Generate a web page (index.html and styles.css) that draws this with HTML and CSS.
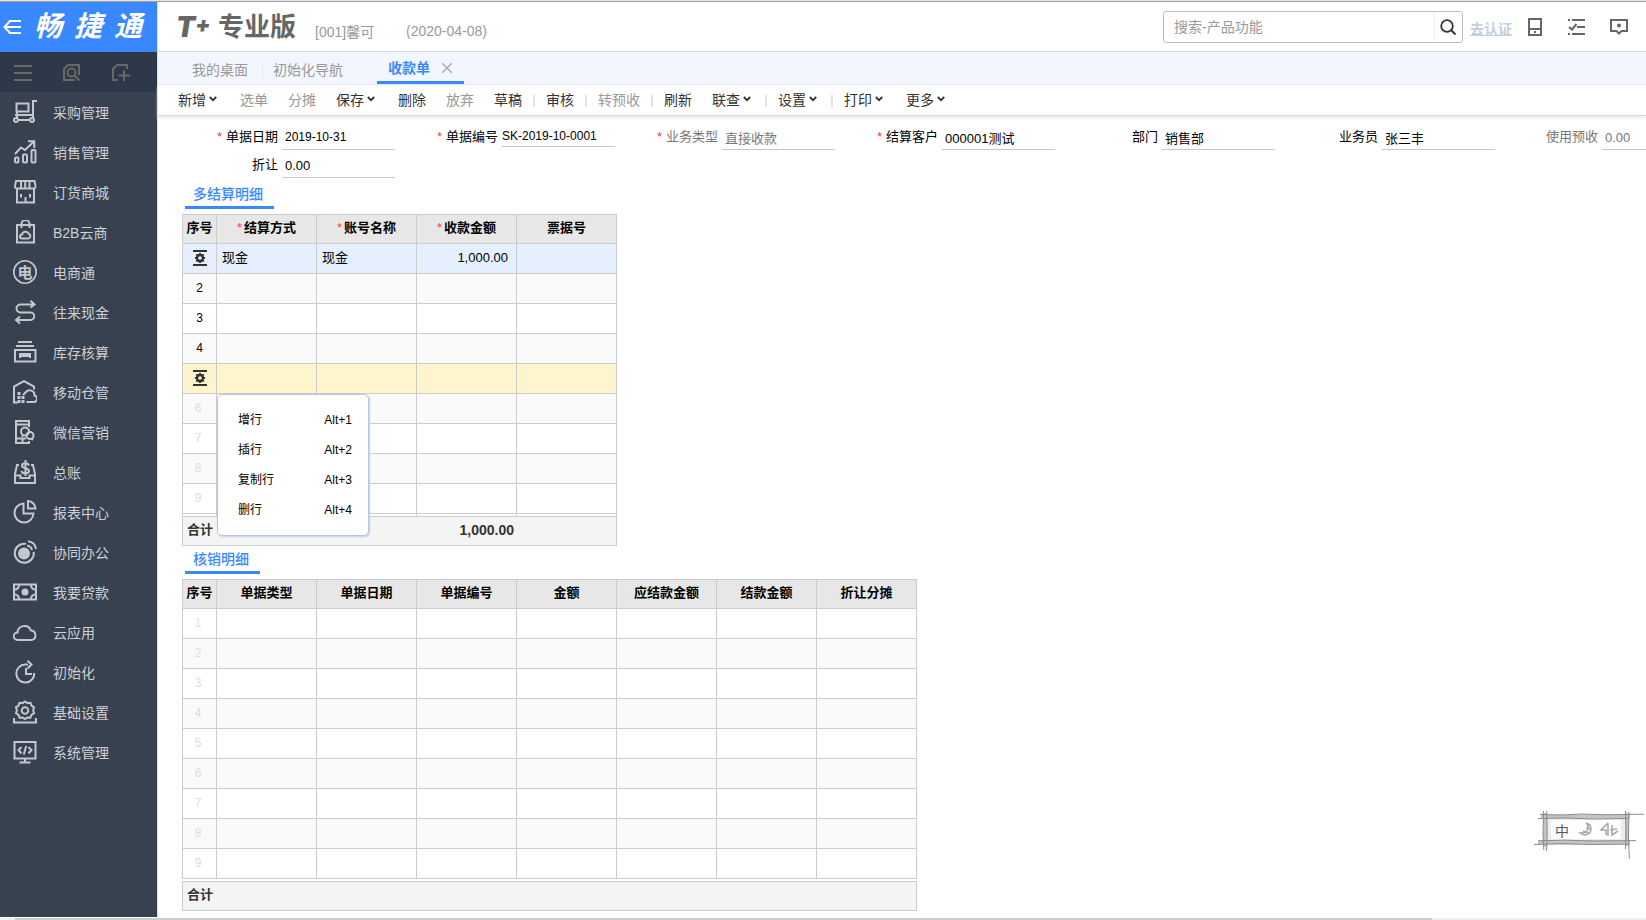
FILE: index.html
```html
<!DOCTYPE html>
<html lang="zh-CN">
<head>
<meta charset="utf-8">
<title>收款单</title>
<link rel="stylesheet" href="styles.css">
</head>
<body>
<svg class="defs" aria-hidden="true">
  <symbol id="row-gear" viewBox="0 0 14 16"><path d="M0 1h14M0 15h14" stroke="#333" stroke-width="2"/><circle cx="7" cy="8" r="3" fill="none" stroke="#333" stroke-width="2.400"/><path d="M7 3v2M7 11v2M2 8h2M10 8h2M3.400 4.400L5 6M9 10l1.600 1.600M3.400 11.600L5 10M9 6l1.600-1.600" stroke="#333" stroke-width="2"/></symbol>
  <symbol id="chev" viewBox="0 0 8 6"><path d="M.8 1L4 4.200 7.200 1" fill="none" stroke="#333" stroke-width="1.800"/></symbol>
</svg>
<div class="page">
  <div class="shell">
    <aside class="sidebar">
      <div class="brand">
        <button class="back" aria-label="收起"><svg width="19" height="18" viewBox="0 0 19 18"><path d="M7 3L1.500 9 7 15M1.500 9H18M6 3h12M6 15h12" fill="none" stroke="#fff" stroke-width="2"/></svg></button>
        <div class="brand-name"><span>畅</span><span>捷</span><span>通</span></div>
      </div>
      <div class="side-tools">
        <button aria-label="菜单"><svg width="18" height="18" viewBox="0 0 18 18"><path d="M0 2h18M0 9h18M0 16h18"/></svg></button>
        <button aria-label="查找"><svg width="18" height="18" viewBox="0 0 18 18"><path d="M12 16H1V5l4-4h11v10"/><circle cx="8.500" cy="8.500" r="4"/><path d="M11.500 11.500l5 5"/></svg></button>
        <button aria-label="新建"><svg width="18" height="18" viewBox="0 0 18 18"><path d="M6 16H1V5l4-4h10v4M12 6v11M6.500 11.500H18"/></svg></button>
      </div>
      <nav class="menu">
        <a href="#"><svg viewBox="0 0 24 24"><path d="M3.500 3.500h12v8h-12zM24 1h-4v17M4 12v6M2 15h18M5 20h12"/><circle cx="3" cy="20" r="2"/><circle cx="19" cy="20" r="2"/></svg>采购管理</a>
        <a href="#"><svg viewBox="0 0 24 24"><rect x="2" y="17.500" width="3.500" height="5" rx="1"/><rect x="10" y="14.500" width="4" height="8" rx="1"/><rect x="18.500" y="10" width="4" height="12.500" rx="1"/><path d="M2 14l6-6.500 4 2.500 9-8.500M15 1.300h6.300V8"/></svg>销售管理</a>
        <a href="#"><svg viewBox="0 0 24 24"><path d="M3 1h18.500l1 5a2 2 0 0 1-2 2.500h-17A2 2 0 0 1 2 6zM8 1v7M12.200 1v7M16.500 1v7M4 9v13.500h17V9M8 14v3.500M17 14v3.500M12.500 17v5"/></svg>订货商城</a>
        <a href="#"><svg viewBox="0 0 24 24"><path d="M4 5h17v17.500H4zM8.500 8V4a4 4 0 0 1 8 0v4M9 18.500a2 2 0 0 1 0-4 3.500 3.500 0 0 1 6.500-1 2.600 2.600 0 0 1 0 5z"/></svg>B2B云商</a>
        <a href="#"><svg viewBox="0 0 24 24"><circle cx="12" cy="12" r="11.200" stroke-width="1.600"/><text x="12" y="17.500" class="glyph">电</text></svg>电商通</a>
        <a href="#"><svg viewBox="0 0 24 24"><path d="M21 4.500H7.500a4 4 0 0 0 0 8h10a3.700 3.700 0 0 1 0 7.500H4M17.500.8l4 3.700-4 3M7 16.500L3 20l4 3.500"/></svg>往来现金</a>
        <a href="#"><svg viewBox="0 0 24 24"><path d="M5 2h14M3 6h18M2 10h20.500v11.500H2zM7 18v-4h10v4M7 16h10"/></svg>库存核算</a>
        <a href="#"><svg viewBox="0 0 24 24"><path d="M5 22.500H1V6.500L11 1l10 5.500v3M13.500 22h7a3.300 3.300 0 0 0 1-6.500 4.800 4.800 0 0 0-8.500-3.500l-3 3"/><path d="M4.500 13.500h3M4.500 17.500h7M4.500 21.500h8" stroke-dasharray="3 1" stroke-width="3"/></svg>移动仓管</a>
        <a href="#"><svg viewBox="0 0 24 24"><path d="M16 7V1H3v22h13v-2M3 4.500h13M3 18.500h10M9.500 18.500v4"/><circle cx="12" cy="11.500" r="4"/><circle cx="17" cy="15.500" r="3.500"/><path d="M10 15l-1 2M18 18.500l2 1.500"/></svg>微信营销</a>
        <a href="#"><svg viewBox="0 0 24 24"><path d="M6 5H4L2 14v9h20v-9L20 5h-2M2 15.500h5.500V18h9v-2.500H22M16 5.500c-1-3-7-3-7 .3 0 3 7 2 7 5.200 0 3.500-7 3-7.500-.2M12.500 0v16"/></svg>总账</a>
        <a href="#"><svg viewBox="0 0 24 24"><path d="M10.500 3.500a9.500 9.500 0 1 0 10 10h-10zM15 1v7.500h7.500A8 8 0 0 0 15 1z"/></svg>报表中心</a>
        <a href="#"><svg viewBox="0 0 24 24"><path d="M13 3.800a9.500 9.500 0 1 0 7.700 8"/><circle cx="11" cy="13.500" r="5" fill="#c3c8cf"/><path d="M14 5.500c3 .5 4.500 2 5 4.500M15 1.200c5 .6 7.500 3.500 8 7.800"/></svg>协同办公</a>
        <a href="#"><svg viewBox="0 0 24 24"><path d="M1 4.500h22v15H1zM2 9.500c2 0 4-2 4-4M22 9.500c-2 0-4-2-4-4M2 14.500c2 0 4 2 4 4M22 14.500c-2 0-4 2-4 4"/><circle cx="12" cy="12" r="2.500" fill="#c3c8cf"/></svg>我要贷款</a>
        <a href="#"><svg viewBox="0 0 24 24"><path d="M4.500 20a3.500 3.500 0 0 1 0-7.500A7 7 0 0 1 18 10.500 4.800 4.800 0 0 1 18.500 20z"/></svg>云应用</a>
        <a href="#"><svg viewBox="0 0 24 24"><path d="M15 4.500h-3a9 9 0 1 0 9.300 8.500M13 8v6h6M14.500.8l4 3.700-4 4"/></svg>初始化</a>
        <a href="#"><svg viewBox="0 0 24 24"><path d="M12 1.500l2.500 1.600 3-.3 1 2.900 2.500 1.600-.8 3 .8 3-2.600 1.600-1 2.800-3-.2-2.400 1.600-2.500-1.600-3 .2-1-2.800L3 13.300l.9-3-.9-3 2.500-1.600 1-2.900 3 .3zM1 18v4.500h22V18"/><circle cx="12" cy="10.500" r="3.300"/></svg>基础设置</a>
        <a href="#"><svg viewBox="0 0 24 24"><path d="M1.500 2h21v16.500h-21zM12 18.500V22M6.500 22.500h11M8.500 7L5.500 10l3 3.500M15.500 7l3 3-3 3.500M13.200 6l-2.400 8.500"/></svg>系统管理</a>
      </nav>
    </aside>
    <main class="main">
      <header class="header">
        <div class="product"><span class="tplus">T<sup>+</sup></span><span class="edition">专业版</span></div>
        <span class="account">[001]馨可</span>
        <span class="date">(2020-04-08)</span>
        <div class="header-right">
          <form class="search">
            <input type="text" aria-label="搜索" placeholder="搜索-产品功能">
            <button type="button" aria-label="搜索"><svg width="17" height="17" viewBox="0 0 17 17"><circle cx="7" cy="7" r="5.800" fill="none" stroke="#333" stroke-width="1.800"/><path d="M11.500 11.500l4 4" stroke="#333" stroke-width="2"/></svg></button>
          </form>
          <a class="cert" href="#">去认证</a>
          <div class="icons">
            <button aria-label="终端"><svg width="14" height="18" viewBox="0 0 14 18"><path d="M1 1h12v16H1zM1 11h12"/><path d="M6 14h2"/></svg></button>
            <button aria-label="待办"><svg width="18" height="18" viewBox="0 0 18 18"><path d="M5 2h13M10 9h8M5 16h13M1 2h2M1 16h2M2 9l3 2.500L9.500 6"/></svg></button>
            <button aria-label="消息"><svg width="18" height="18" viewBox="0 0 18 18"><path d="M1 2h16v11h-5.500L9 15.500 6.500 13H1z"/><circle cx="9" cy="7.500" r="1"/></svg></button>
          </div>
        </div>
      </header>
      <nav class="tabs">
        <a class="tab" href="#">我的桌面</a>
        <a class="tab tab-second" href="#">初始化导航</a>
        <div class="tab tab-active"><a href="#">收款单</a><button aria-label="关闭"><svg width="10" height="10" viewBox="0 0 10 10"><path d="M0 0l10 10M10 0L0 10" stroke="#aaa" stroke-width="1.400"/></svg></button></div>
      </nav>
      <div class="toolbar">
        <button>新增<svg><use href="#chev"/></svg></button>
        <button disabled>选单</button>
        <button disabled>分摊</button>
        <button>保存<svg><use href="#chev"/></svg></button>
        <button>删除</button>
        <button disabled>放弃</button>
        <button>草稿</button>
        <i></i>
        <button>审核</button>
        <i></i>
        <button disabled>转预收</button>
        <i></i>
        <button>刷新</button>
        <button>联查<svg><use href="#chev"/></svg></button>
        <i></i>
        <button>设置<svg><use href="#chev"/></svg></button>
        <i></i>
        <button>打印<svg><use href="#chev"/></svg></button>
        <button>更多<svg><use href="#chev"/></svg></button>
      </div>
      <div class="form">
        <div class="field"><label for="f1"><b>*</b>单据日期</label><input class="small" id="f1" value="2019-10-31"></div>
        <div class="field"><label for="f2"><b>*</b>单据编号</label><input class="small short" id="f2" value="SK-2019-10-0001"></div>
        <div class="field muted"><label for="f3"><b>*</b>业务类型</label><input id="f3" value="直接收款" readonly></div>
        <div class="field"><label for="f4"><b>*</b>结算客户</label><input id="f4" value="000001测试"></div>
        <div class="field"><label for="f5">部门</label><input id="f5" value="销售部"></div>
        <div class="field"><label for="f6">业务员</label><input id="f6" value="张三丰"></div>
        <div class="field muted"><label for="f7">使用预收</label><input id="f7" value="0.00" readonly></div>
        <div class="field"><label for="f8">折让</label><input id="f8" value="0.00"></div>
      </div>
      <section class="block">
        <h2>多结算明细</h2>
        <table class="grid grid-five">
          <thead><tr><th class="no">序号</th><th><b>*</b>结算方式</th><th><b>*</b>账号名称</th><th><b>*</b>收款金额</th><th>票据号</th></tr></thead>
          <tbody>
            <tr class="current"><td class="no"><button aria-label="行操作"><svg width="14" height="16"><use href="#row-gear"/></svg></button></td><td>现金</td><td>现金</td><td class="num">1,000.00</td><td></td></tr>
            <tr><td class="no">2</td><td></td><td></td><td></td><td></td></tr>
            <tr><td class="no">3</td><td></td><td></td><td></td><td></td></tr>
            <tr><td class="no">4</td><td></td><td></td><td></td><td></td></tr>
            <tr class="hovered"><td class="no"><button aria-label="行操作"><svg width="14" height="16"><use href="#row-gear"/></svg></button></td>
              <td class="anchor">
                <div class="popup">
                  <button><span>增行</span><span>Alt+1</span></button>
                  <button><span>插行</span><span>Alt+2</span></button>
                  <button><span>复制行</span><span>Alt+3</span></button>
                  <button><span>删行</span><span>Alt+4</span></button>
                </div>
              </td><td></td><td></td><td></td></tr>
            <tr class="idle"><td class="no">6</td><td></td><td></td><td></td><td></td></tr>
            <tr class="idle"><td class="no">7</td><td></td><td></td><td></td><td></td></tr>
            <tr class="idle"><td class="no">8</td><td></td><td></td><td></td><td></td></tr>
            <tr class="idle"><td class="no">9</td><td></td><td></td><td></td><td></td></tr>
          </tbody>
          <tfoot>
            <tr class="gap"><td></td><td></td><td></td><td></td><td></td></tr>
            <tr class="total"><td colspan="3">合计</td><td class="num">1,000.00</td><td></td></tr>
          </tfoot>
        </table>
      </section>
      <section class="block">
        <h2>核销明细</h2>
        <table class="grid grid-eight">
          <thead><tr><th class="no">序号</th><th>单据类型</th><th>单据日期</th><th>单据编号</th><th>金额</th><th>应结款金额</th><th>结款金额</th><th>折让分摊</th></tr></thead>
          <tbody>
            <tr class="idle"><td class="no">1</td><td></td><td></td><td></td><td></td><td></td><td></td><td></td></tr>
            <tr class="idle"><td class="no">2</td><td></td><td></td><td></td><td></td><td></td><td></td><td></td></tr>
            <tr class="idle"><td class="no">3</td><td></td><td></td><td></td><td></td><td></td><td></td><td></td></tr>
            <tr class="idle"><td class="no">4</td><td></td><td></td><td></td><td></td><td></td><td></td><td></td></tr>
            <tr class="idle"><td class="no">5</td><td></td><td></td><td></td><td></td><td></td><td></td><td></td></tr>
            <tr class="idle"><td class="no">6</td><td></td><td></td><td></td><td></td><td></td><td></td><td></td></tr>
            <tr class="idle"><td class="no">7</td><td></td><td></td><td></td><td></td><td></td><td></td><td></td></tr>
            <tr class="idle"><td class="no">8</td><td></td><td></td><td></td><td></td><td></td><td></td><td></td></tr>
            <tr class="idle"><td class="no">9</td><td></td><td></td><td></td><td></td><td></td><td></td><td></td></tr>
          </tbody>
          <tfoot>
            <tr class="gap open"><td colspan="8"></td></tr>
            <tr class="total"><td colspan="8">合计</td></tr>
          </tfoot>
        </table>
      </section>
    </main>
  </div>
  <div class="scrollbar"><div class="thumb"></div></div>
</div>
<div class="ime">
  <svg width="114" height="50" viewBox="0 0 114 50">
    <rect x="13" y="6" width="82" height="27" fill="#ececec"/>
    <rect x="19" y="10" width="70" height="19" rx="3" fill="#fff"/>
    <g fill="none" stroke="#c4c4c4" stroke-width="4"><path d="M9 6.500h89M6 32.500h92M13 3v34M95 3v33"/></g>
    <g fill="none" stroke="#8c8c8c" stroke-width="1"><path d="M8 4.500l22 .5 20-1 24 .8 38-.6M6 8.500l28-.5 26 1 36-.5M6 30.800l26-.6 30 .8 42-.4M2 34.500l28-.8 30 .9 36-.5M11.500 1l-.5 24 .8 15M14.700 1l.5 22-.6 18M93.500 1l.6 22-.6 16M97 2l-.5 23 .8 24"/></g>
    <text x="30" y="26" class="ime-text">中</text>
    <g fill="none" stroke="#aaa" stroke-width="1.600"><path d="M54 13c5 5 2 10-6 10 5 4 11 1 11-4 0-3-2-5-5-6zM51 21l5 2M54 18l4 1"/><path d="M76 13l-7 7h5v5M76 13v13M80 15v10l6-4M78 20l7-1"/></g>
  </svg>
</div>
</body>
</html>
```
FILE: styles.css
```css
* { box-sizing: border-box; }
body {
  margin: 0;
  background: #fff;
  color: #000;
  font-family: "Liberation Sans", "Noto Sans CJK SC", sans-serif;
  font-size: 13px;
  overflow-x: hidden;
}
button {
  margin: 0;
  padding: 0;
  border: 0;
  background: none;
  font: inherit;
  color: inherit;
}
a { color: inherit; text-decoration: none; }
svg { display: block; flex: none; }
.defs { position: absolute; width: 0; height: 0; }

.page {
  display: flex;
  flex-direction: column;
  min-height: 100vh;
  border-top: 1px solid #e4e4e4;
}
.shell {
  display: flex;
  flex: 1;
  border-top: 1px solid #a0a0a0;
  border-bottom: 1px solid #fff;
}

/* Sidebar */
.sidebar { flex: 0 0 157px; background: #37414f; }
.brand {
  display: flex;
  align-items: center;
  height: 50px;
  padding-left: 3px;
  background: #3a88ff;
  color: #fff;
}
.brand-name {
  display: flex;
  gap: 12px;
  margin-left: 12px;
  font-size: 28px;
  font-weight: 700;
  font-style: italic;
  line-height: 50px;
}
.side-tools {
  display: flex;
  align-items: center;
  gap: 31px;
  height: 40px;
  padding: 2px 0 0 14px;
  background: #2d3849;
}
.side-tools svg { fill: none; stroke: #686868; stroke-width: 2; }
.menu a {
  display: flex;
  align-items: center;
  gap: 16px;
  height: 40px;
  padding-left: 13px;
  font-size: 14px;
  color: #cdd1d7;
}
.menu svg {
  width: 24px;
  height: 24px;
  fill: none;
  stroke: #c3c8cf;
  stroke-width: 2;
}
.menu .glyph {
  fill: #c3c8cf;
  stroke: none;
  font-size: 15px;
  font-weight: 700;
  text-anchor: middle;
}

/* Header */
.main { flex: 1; min-width: 0; border-left: 1px solid #dcdfe4; }
.header {
  display: flex;
  align-items: center;
  height: 50px;
  padding-left: 18px;
  border-bottom: 1px solid #d9d9d9;
  color: #999;
  font-size: 14px;
}
.product { display: flex; align-items: center; color: #666; font-weight: 700; line-height: 50px; }
.tplus { width: 42px; font-family: Inter, sans-serif; font-size: 28px; font-weight: 900; font-style: italic; white-space: nowrap; }
.tplus sup { font-size: 22px; line-height: 0; vertical-align: 5px; }
.edition { font-size: 26px; }
.account { margin: 9px 0 0 19px; width: 91px; }
.date { margin-top: 9px; }
.header-right { display: flex; align-items: center; margin-left: auto; padding-right: 18px; }
.search {
  display: flex;
  width: 300px;
  height: 32px;
  border: 1px solid #bdbdbd;
  border-radius: 3px;
  margin-top: 1px;
}
.search input {
  flex: 1;
  min-width: 0;
  padding: 0 10px;
  border: 0;
  background: none;
  font: inherit;
  outline: 0;
}
.search input::placeholder { color: #999; opacity: 1; }
.search button { width: 28px; padding-left: 5px; border-left: 1px solid #f2f2f2; }
.cert {
  margin: 2px 16px 0 7px;
  color: #c3cfdd;
  font-weight: 700;
  text-decoration: underline;
}
.icons { display: flex; align-items: center; gap: 25px; padding-top: 1px; }
.icons svg { fill: none; stroke: #666; stroke-width: 2; }

/* Document tabs */
.tabs {
  display: flex;
  height: 33px;
  padding-left: 34px;
  border-bottom: 1px solid #e3e7f2;
  background: #f2f6ff;
  color: #999;
  font-size: 14px;
  line-height: 36px;
}
.tab { margin-right: 14px; }
.tab-second { width: 105px; margin-right: 0; padding-left: 10px; border-left: 1px solid #e3e7f0; border-image: linear-gradient(transparent 10px, #e3e7f0 10px, #e3e7f0 26px, transparent 26px) 1; }
.tab-second + .tab-active { margin-left: 10px; }
.tab-active {
  display: flex;
  align-items: center;
  gap: 12px;
  width: 87px;
  height: 32px;
  padding: 3px 0 0 11px;
  border-bottom: 3px solid #3a88ff;
  color: #3a88ff;
  font-weight: 700;
}

/* Toolbar */
.toolbar {
  display: flex;
  align-items: center;
  height: 31px;
  padding: 0 0 2px 20px;
  border-bottom: 1px solid #d6d6d6;
  box-shadow: 0 2px 3px #ebebeb;
  color: #333;
  font-size: 14px;
}
.toolbar button { display: flex; align-items: center; margin-right: 20px; white-space: nowrap; }
.toolbar button:disabled { color: #999; }
.toolbar svg { width: 8px; height: 6px; margin: 0 3px; }
.toolbar i { width: 2px; height: 12px; margin: 4px 11px 0 -9px; background: #e2e2e2; }

/* Form */
.form {
  display: grid;
  grid-template-columns: repeat(7, 220px);
  overflow: hidden;
  padding: 6px 0 0 17px;
}
.field { display: flex; gap: 4px; height: 28px; }
.field label { flex: 1; padding-top: 3px; line-height: 24px; text-align: right; }
.field b, .grid b { color: #ff3b4e; font-weight: 400; }
.field b { margin-right: 4px; }
.grid b { margin-right: 2px; }
.field input {
  width: 113px;
  height: 28px;
  padding: 3px 3px 0;
  border: 0;
  border-bottom: 1px solid #c9c9c9;
  background: none;
  color: inherit;
  font: inherit;
  outline: 0;
}
.field .small { font-size: 12px; }
.field .short { height: 25px; padding-left: 0; }
.muted { color: #777; }

/* Detail grids */
.block { padding-left: 24px; }
.form + .block { padding-top: 3px; }
.block h2 {
  width: max-content;
  margin: 0 0 5px 3px;
  padding: 1px 11px 0 8px;
  border-bottom: 3px solid #3a88ff;
  color: #3a88ff;
  font-size: 14px;
  font-weight: 500;
  line-height: 24px;
}
.grid { border-spacing: 0; table-layout: fixed; }
.grid-five { width: 435px; }
.grid-eight { width: 735px; }
.grid th, .grid td {
  height: 30px;
  padding: 0 5px 2px;
  border: 0 solid #ccc;
  border-width: 0 1px 1px 0;
  line-height: 20px;
  text-align: left;
}
.grid tr > :first-child { border-left-width: 1px; }
.grid th { border-top-width: 1px; background: #e7e7e7; text-align: center; font-weight: 700; }
.grid .no { width: 35px; padding: 0 0 2px; text-align: center; font-size: 12px; }
.grid th.no { font-size: 13px; }
.grid .num { padding-right: 8px; text-align: right; }
.grid tbody tr:nth-child(even) { background: #fafafa; }
.grid tbody .current { background: #e4f0ff; }
.grid tbody .hovered { background: #fff5cc; }
.grid .no svg { margin: 0 auto; }
.grid .no button { display: block; width: 100%; }
.grid .idle .no { padding-right: 3px; color: #ddd; }
.grid .gap td { height: 3px; padding: 0; line-height: 0; }
.grid .open td { border-left-width: 0; border-right-width: 0; }
.grid .total td { height: 29px; padding-left: 4px; border-right-width: 0; background: #f4f4f4; color: #333; font-weight: 700; }
.grid .total td:last-child { border-right-width: 1px; }
.grid .total .num { padding: 0 3px 2px 0; font-size: 14px; }

/* Row menu */
.grid .anchor { position: relative; }
.popup {
  position: absolute;
  top: 100%;
  left: 0;
  z-index: 2;
  width: 152px;
  margin-top: 1px;
  padding: 10px 16px 10px 20px;
  border: 1px solid #b5c5e2;
  border-radius: 5px;
  background: #fff;
  box-shadow: 1px 1px 2px #c8d0de;
  font-size: 12px;
}
.popup button { display: flex; align-items: center; justify-content: space-between; width: 100%; height: 30px; }

/* Window edge */
.scrollbar { height: 2px; padding: 0 13% 0 15px; background: #efefef; }
.thumb { height: 2px; background: #cdcdcd; }

/* Floating input-method bar */
.ime { position: fixed; right: 0; bottom: 60px; z-index: 3; }
.ime svg { overflow: visible; }
.ime-text { fill: #555; font-size: 14px; text-anchor: middle; }
```
